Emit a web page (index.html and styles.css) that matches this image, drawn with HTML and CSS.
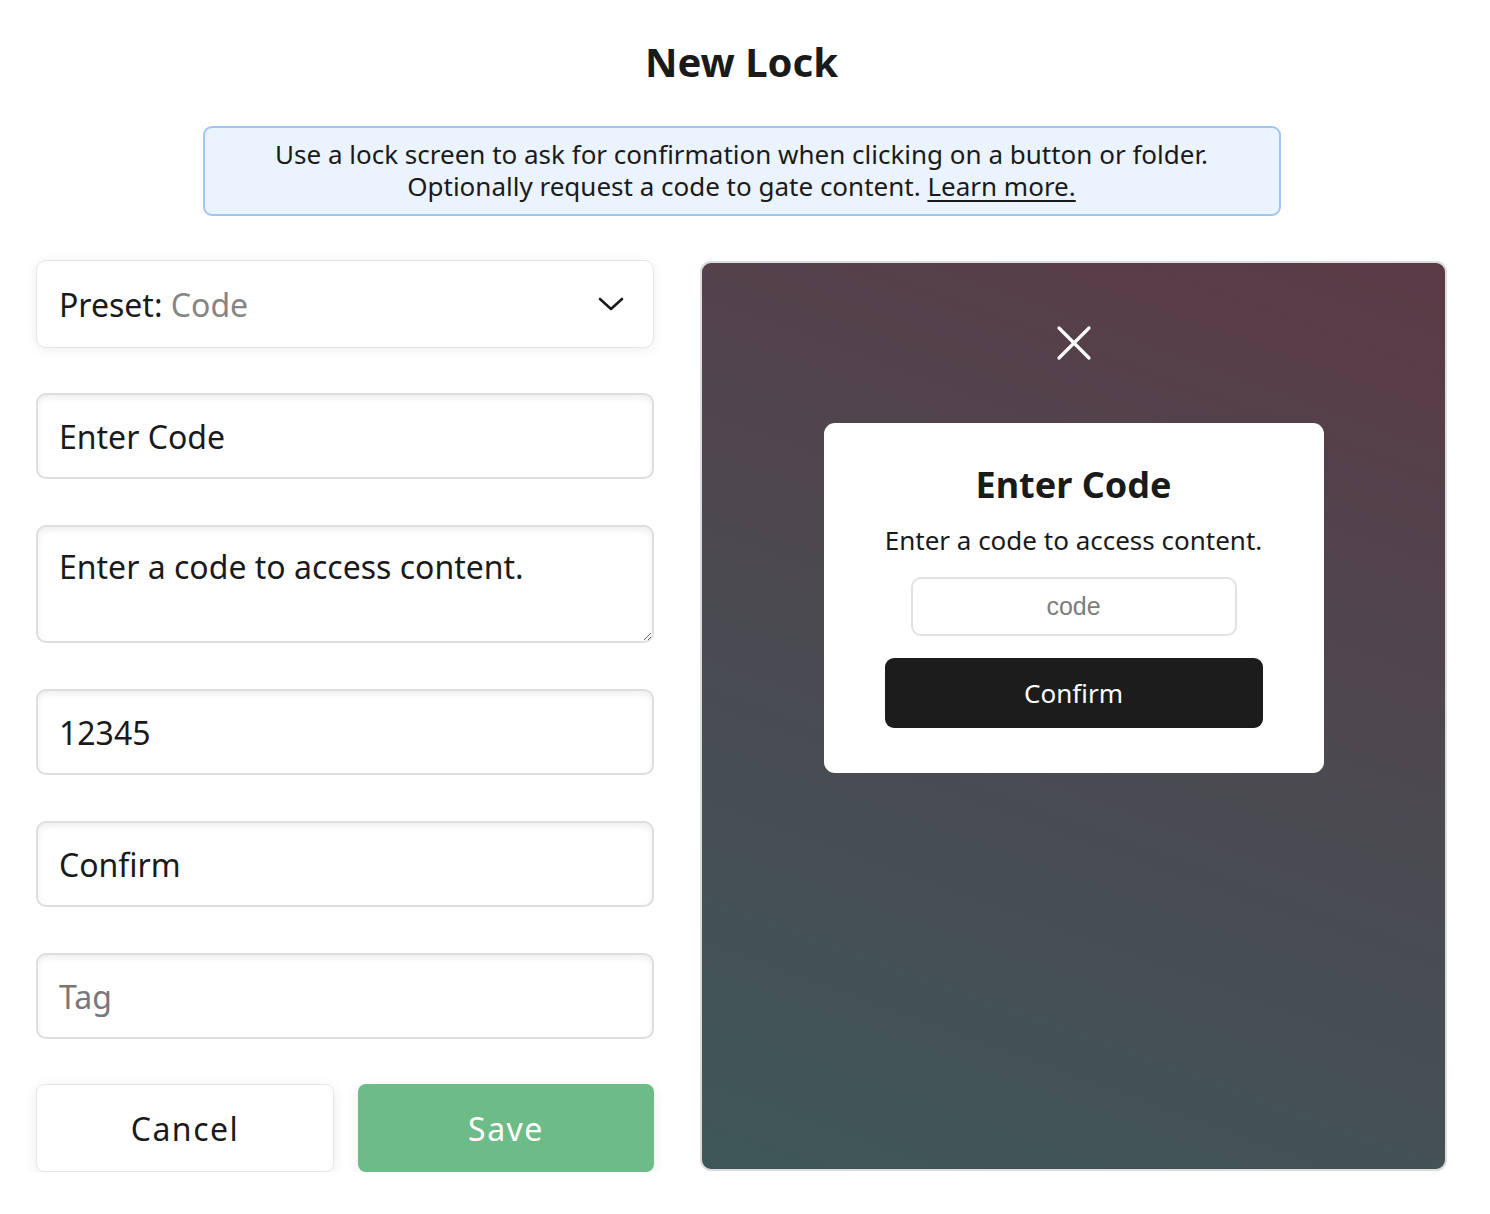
FILE: index.html
```html
<!DOCTYPE html>
<html lang="en">
<head>
  <meta charset="utf-8" />
  <title>New Lock</title>
  <meta name="viewport" content="width=device-width, initial-scale=1.0">
  <link rel="stylesheet" href="styles.css">
</head>
<body>
  <div class="lock-editor">
    <h1>New Lock</h1>
    <div class="info">
      Use a lock screen to ask for confirmation when clicking on a button or folder.<br>
      Optionally request a code to gate content. <a href="#">Learn more.</a>
    </div>
    <div class="editor-body">
      <form class="lock-form">
        <div class="preset">
          <span>Preset: <span class="preset-value">Code</span></span>
          <svg class="chevron" width="28" height="16" viewBox="0 0 28 16">
            <path d="M3 3 L14 13 L25 3" fill="none" stroke="#1a1a1a" stroke-width="2.6" stroke-linecap="round" stroke-linejoin="round"/>
          </svg>
        </div>
        <input type="text" class="field" value="Enter Code" />
        <textarea class="field field-area">Enter a code to access content.</textarea>
        <input type="text" class="field" value="12345" />
        <input type="text" class="field" value="Confirm" />
        <input type="text" class="field" placeholder="Tag" />
        <div class="actions">
          <button type="button" class="btn btn-cancel">Cancel</button>
          <button type="button" class="btn btn-save">Save</button>
        </div>
      </form>
      <div class="preview">
        <svg class="close-icon" width="36" height="36" viewBox="0 0 36 36">
          <path d="M3 3 L33 33 M33 3 L3 33" stroke="#fff" stroke-width="3.2" stroke-linecap="round"/>
        </svg>
        <div class="lock-card">
          <h2>Enter Code</h2>
          <p>Enter a code to access content.</p>
          <input type="text" class="code-input" placeholder="code" />
          <button type="button" class="confirm-btn">Confirm</button>
        </div>
      </div>
    </div>
  </div>
</body>
</html>
```

FILE: styles.css
```css
:root {
  --text: #1a1a1a;
  --muted: #858585;
  --border: #dedede;
  --green: #6dbb87;
}
html, body {
  margin: 0;
  padding: 0;
  background: #fff;
  color: var(--text);
  font-family: 'Noto Sans', 'Open Sans', Arial, sans-serif;
}
.lock-editor {
  width: 1411px;
  margin-left: 36px;
  padding-top: 36px;
  display: flex;
  flex-direction: column;
  align-items: center;
}
h1 {
  font-size: 40px;
  font-weight: 700;
  line-height: 52px;
  margin: 0 0 38px 0;
}
.info {
  box-sizing: border-box;
  width: 1078px;
  height: 90px;
  background: #ebf3fe;
  border: 2px solid #9fc6f4;
  border-radius: 9px;
  font-size: 26px;
  line-height: 32px;
  text-align: center;
  padding-top: 10px;
}
.info a {
  color: var(--text);
  text-decoration: underline;
  text-underline-offset: 4px;
}
.editor-body {
  width: 100%;
  display: flex;
  gap: 46px;
  margin-top: 44px;
}
.lock-form {
  width: 618px;
  flex: none;
  display: flex;
  flex-direction: column;
  gap: 46px;
}
.preset {
  box-sizing: border-box;
  height: 88px;
  margin-bottom: -1px;
  display: flex;
  align-items: center;
  justify-content: space-between;
  padding: 0 28px 0 22px;
  background: #fff;
  border: 1px solid #e6e6e6;
  border-radius: 10px;
  box-shadow: 0 2px 12px rgba(0,0,0,0.07);
  font-size: 32px;
}
.preset-value {
  color: var(--muted);
}
.field {
  box-sizing: border-box;
  height: 86px;
  width: 100%;
  margin: 0;
  padding: 0 21px;
  background: #fff;
  border: 2px solid var(--border);
  border-radius: 10px;
  box-shadow: inset 0 3px 6px rgba(0,0,0,0.07);
  font-family: inherit;
  font-size: 32px;
  color: var(--text);
  outline: none;
}
.field::placeholder {
  color: #777;
}
.field-area {
  height: 118px;
  padding-top: 18px;
  line-height: 44px;
  resize: vertical;
}
.actions {
  display: flex;
  gap: 24px;
  margin-top: -1px;
}
.btn {
  flex: 1;
  height: 88px;
  border-radius: 8px;
  font-family: inherit;
  font-size: 32px;
  letter-spacing: 1.5px;
  cursor: pointer;
  box-shadow: 0 3px 14px rgba(0,0,0,0.08);
}
.btn-cancel {
  background: #fff;
  border: 1px solid #e6e6e6;
  color: var(--text);
}
.btn-save {
  background: var(--green);
  border: none;
  color: #fff;
}
.preview {
  box-sizing: border-box;
  width: 748px;
  height: 910px;
  margin-top: 1px;
  border: 2px solid #dcdcdc;
  border-radius: 11px;
  background: linear-gradient(200deg, #5b3a46 0%, #4b4a51 50%, #3e5759 100%);
  display: flex;
  flex-direction: column;
  align-items: center;
  padding-top: 62px;
}
.close-icon {
  display: block;
}
.lock-card {
  box-sizing: border-box;
  width: 500px;
  height: 350px;
  margin-top: 62px;
  background: #fff;
  border-radius: 11px;
  display: flex;
  flex-direction: column;
  align-items: center;
  padding-top: 36px;
}
.lock-card h2 {
  font-size: 36px;
  font-weight: 700;
  line-height: 52px;
  margin: 0;
}
.lock-card p {
  font-size: 26px;
  line-height: 36px;
  margin: 11px 0 19px 0;
}
.code-input {
  box-sizing: border-box;
  width: 326px;
  height: 59px;
  border: 2px solid #e2e2e2;
  border-radius: 10px;
  text-align: center;
  font-family: 'Liberation Sans', Arial, sans-serif;
  font-size: 25px;
  outline: none;
}
.code-input::placeholder {
  color: #7d7d7d;
}
.confirm-btn {
  width: 378px;
  height: 70px;
  margin-top: 22px;
  background: #1c1c1c;
  color: #fff;
  border: none;
  border-radius: 9px;
  font-family: 'Noto Sans', sans-serif;
  font-size: 26px;
}
```
